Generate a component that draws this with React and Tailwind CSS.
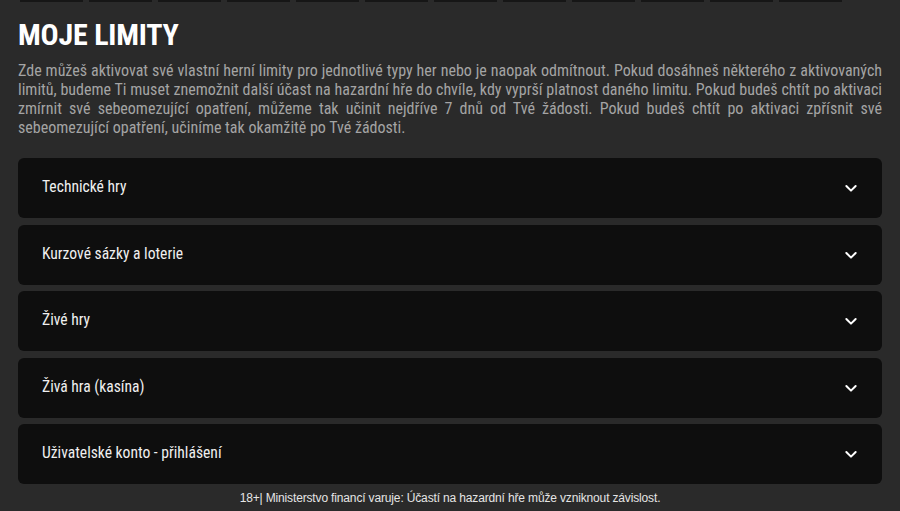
import React from 'react';

const sections = [
  'Technické hry',
  'Kurzové sázky a loterie',
  'Živé hry',
  'Živá hra (kasína)',
  'Uživatelské konto - přihlášení',
];

const condensed = {
  fontFamily: "'Roboto Condensed', 'Liberation Sans Narrow', 'DejaVu Sans Condensed', Roboto, sans-serif",
};

function Chevron() {
  return (
    <svg width="16" height="16" viewBox="0 0 24 24" fill="none" stroke="currentColor" strokeWidth="3" strokeLinecap="round" strokeLinejoin="round">
      <path d="M5 9l7 7 7-7" />
    </svg>
  );
}

export default function App() {
  return (
    <div className="w-[900px] h-[511px] bg-[#2a2a2a] overflow-hidden flex flex-col font-stretch-condensed" style={condensed}>
      {/* Tab strip (cut off at top) */}
      <div className="flex gap-[6px] pl-[20px] h-[2px]">
        {Array.from({ length: 12 }).map((_, i) => (
          <div key={i} className="w-[63px] h-[2px] bg-[#161616]" />
        ))}
      </div>

      <div className="px-[18px] pt-[17px] flex-1">
        <h1 className="text-[30px] leading-[32px] font-bold text-white uppercase tracking-[-0.2px]">Moje limity</h1>
        <p className="mt-[10px] text-[16px] leading-[19px] text-[#a4a4a4] text-justify">
          Zde můžeš aktivovat své vlastní herní limity pro jednotlivé typy her nebo je naopak odmítnout. Pokud dosáhneš některého z aktivovaných limitů, budeme Ti muset znemožnit další účast na hazardní hře do chvíle, kdy vyprší platnost daného limitu. Pokud budeš chtít po aktivaci zmírnit své sebeomezující opatření, můžeme tak učinit nejdříve 7 dnů od Tvé žádosti. Pokud budeš chtít po aktivaci zpřísnit své sebeomezující opatření, učiníme tak okamžitě po Tvé žádosti.
        </p>

        <div className="mt-[21px] flex flex-col gap-[6.5px]">
          {sections.map((s) => (
            <div key={s} className="h-[60px] rounded-[6px] bg-[#0e0e0e] flex items-center justify-between pl-[24px] pr-[23px]">
              <span className="text-[15.6px] font-[450] text-[#f0f0f0]">{s}</span>
              <span className="text-white"><Chevron /></span>
            </div>
          ))}
        </div>
      </div>

      <div className="h-[27px] flex items-center justify-center text-[12px] tracking-[-0.15px] text-[#e5e5e5] font-stretch-normal" style={{ fontFamily: "'Liberation Sans', Arial, sans-serif" }}>
        18+| Ministerstvo financí varuje: Účastí na hazardní hře může vzniknout závislost.
      </div>
    </div>
  );
}
